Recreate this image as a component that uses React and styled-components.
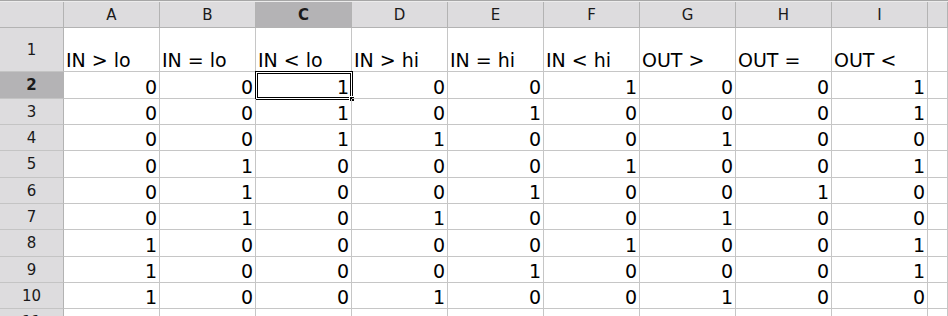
import styled, { createGlobalStyle } from "styled-components";

const GlobalStyle = createGlobalStyle`
  html, body {
    margin: 0;
    padding: 0;
    overflow: hidden;
    background: #ffffff;
  }
`;

const columnas = ["A", "B", "C", "D", "E", "F", "G", "H", "I", ""];
const titulos = ["IN > lo", "IN = lo", "IN < lo", "IN > hi", "IN = hi", "IN < hi", "OUT >", "OUT =", "OUT <"];
const datos = [
  [0, 0, 1, 0, 0, 1, 0, 0, 1],
  [0, 0, 1, 0, 1, 0, 0, 0, 1],
  [0, 0, 1, 1, 0, 0, 1, 0, 0],
  [0, 1, 0, 0, 0, 1, 0, 0, 1],
  [0, 1, 0, 0, 1, 0, 0, 1, 0],
  [0, 1, 0, 1, 0, 0, 1, 0, 0],
  [1, 0, 0, 0, 0, 1, 0, 0, 1],
  [1, 0, 0, 0, 1, 0, 0, 0, 1],
  [1, 0, 0, 1, 0, 0, 1, 0, 0],
];
const alturas = [27, 26, 26, 27, 26, 26, 27, 26, 26];

export default function App() {
  return (
    <>
      <GlobalStyle />
      <Planilha>
        <BarraTopo />
        <Grade>
          <Canto />
          {columnas.map((c, i) => (
            <CabecalhoColuna key={c + i} $ativo={c === "C"}>{c}</CabecalhoColuna>
          ))}

          <CabecalhoLinha $altura={44}>1</CabecalhoLinha>
          {titulos.map((t) => (
            <Celula key={t} $altura={44} $texto>{t}</Celula>
          ))}
          <Celula $altura={44} />

          {datos.map((linha, r) => (
            <Linha key={r} numero={r + 2} valores={linha} altura={alturas[r]} />
          ))}

          <CabecalhoLinha $altura={26}>11</CabecalhoLinha>
          {columnas.map((c, i) => (
            <Celula key={"v" + i} $altura={26} />
          ))}
        </Grade>
      </Planilha>
    </>
  );
}

function Linha({ numero, valores, altura }) {
  return (
    <>
      <CabecalhoLinha $altura={altura} $ativo={numero === 2}>{numero}</CabecalhoLinha>
      {valores.map((v, i) => (
        <Celula key={i} $altura={altura}>
          {v}
          {numero === 2 && i === 2 && (
            <>
              <Cursor />
              <Alca />
            </>
          )}
        </Celula>
      ))}
      <Celula $altura={altura} />
    </>
  );
}

const Planilha = styled.div`
  width: 948px;
  height: 316px;
  overflow: hidden;
  font-family: "DejaVu Sans", "Liberation Sans", sans-serif;
`;

const BarraTopo = styled.div`
  height: 2px;
  box-sizing: border-box;
  border-top: 1px solid #a6a6a6;
  background: #ececec;
`;

const Grade = styled.div`
  display: grid;
  grid-template-columns: 64px repeat(9, 96px) 1fr;
`;

const Canto = styled.div`
  height: 26px;
  box-sizing: border-box;
  background: #dddcde;
  border-right: 1px solid #b3b3b3;
  border-bottom: 1px solid #b3b3b3;
`;

const CabecalhoColuna = styled.div`
  height: 26px;
  box-sizing: border-box;
  display: flex;
  align-items: center;
  justify-content: center;
  background: ${(p) => (p.$ativo ? "#b4b3b5" : "#dddcde")};
  border-right: 1px solid #b3b3b3;
  border-bottom: 1px solid #b3b3b3;
  font-size: 15px;
  font-weight: ${(p) => (p.$ativo ? "bold" : "normal")};
  color: #1a1a1a;
`;

const CabecalhoLinha = styled.div`
  height: ${(p) => p.$altura}px;
  box-sizing: border-box;
  display: flex;
  align-items: center;
  justify-content: center;
  background: ${(p) => (p.$ativo ? "#b4b3b5" : "#dddcde")};
  border-right: 1px solid #b3b3b3;
  border-bottom: 1px solid #c4c4c4;
  font-size: 15px;
  font-weight: ${(p) => (p.$ativo ? "bold" : "normal")};
  color: #1a1a1a;
`;

const Celula = styled.div`
  position: relative;
  height: ${(p) => p.$altura}px;
  box-sizing: border-box;
  display: flex;
  align-items: flex-end;
  justify-content: ${(p) => (p.$texto ? "flex-start" : "flex-end")};
  padding: 0 2px 0 2px;
  border-right: 1px solid #c6c6c6;
  border-bottom: 1px solid #c6c6c6;
  font-size: 19px;
  line-height: 22px;
  color: #000;
  white-space: nowrap;
`;

const Cursor = styled.div`
  position: absolute;
  top: -1px;
  left: -1px;
  right: -2px;
  bottom: -2px;
  border: 1px solid #000;
  box-shadow: inset 0 0 0 1px #fff, inset 0 0 0 2px #000;
  pointer-events: none;
`;

const Alca = styled.div`
  position: absolute;
  right: -4px;
  bottom: -4px;
  width: 4px;
  height: 4px;
  background: #000;
  border: 1px solid #fff;
`;
